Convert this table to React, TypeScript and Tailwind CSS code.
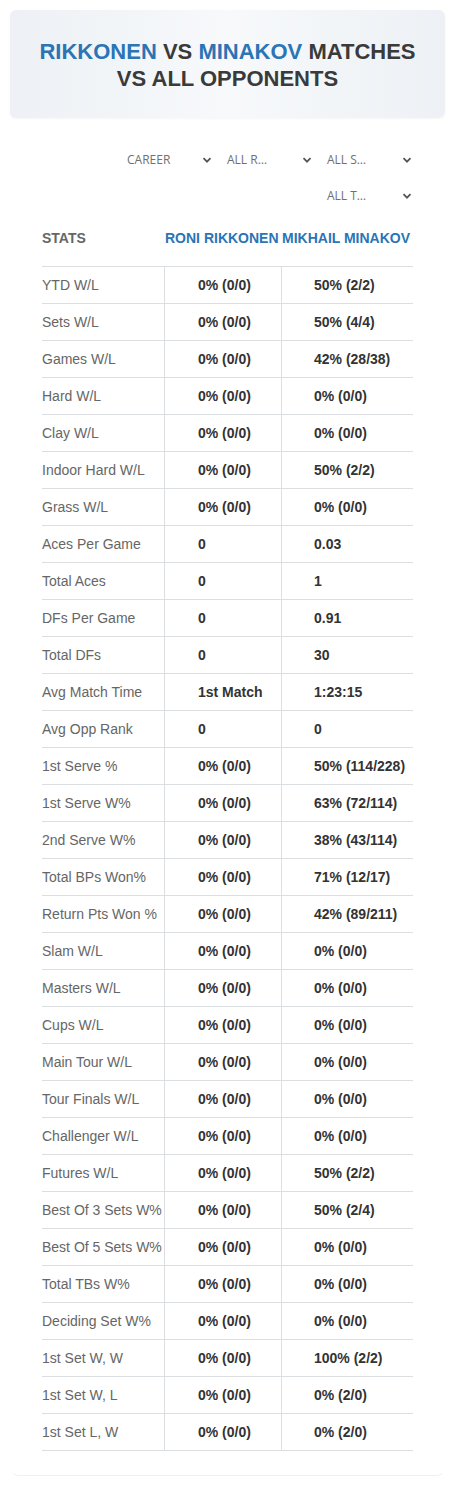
import React from "react";

const rows: [string, string, string][] = [
  ["YTD W/L", "0% (0/0)", "50% (2/2)"],
  ["Sets W/L", "0% (0/0)", "50% (4/4)"],
  ["Games W/L", "0% (0/0)", "42% (28/38)"],
  ["Hard W/L", "0% (0/0)", "0% (0/0)"],
  ["Clay W/L", "0% (0/0)", "0% (0/0)"],
  ["Indoor Hard W/L", "0% (0/0)", "50% (2/2)"],
  ["Grass W/L", "0% (0/0)", "0% (0/0)"],
  ["Aces Per Game", "0", "0.03"],
  ["Total Aces", "0", "1"],
  ["DFs Per Game", "0", "0.91"],
  ["Total DFs", "0", "30"],
  ["Avg Match Time", "1st Match", "1:23:15"],
  ["Avg Opp Rank", "0", "0"],
  ["1st Serve %", "0% (0/0)", "50% (114/228)"],
  ["1st Serve W%", "0% (0/0)", "63% (72/114)"],
  ["2nd Serve W%", "0% (0/0)", "38% (43/114)"],
  ["Total BPs Won%", "0% (0/0)", "71% (12/17)"],
  ["Return Pts Won %", "0% (0/0)", "42% (89/211)"],
  ["Slam W/L", "0% (0/0)", "0% (0/0)"],
  ["Masters W/L", "0% (0/0)", "0% (0/0)"],
  ["Cups W/L", "0% (0/0)", "0% (0/0)"],
  ["Main Tour W/L", "0% (0/0)", "0% (0/0)"],
  ["Tour Finals W/L", "0% (0/0)", "0% (0/0)"],
  ["Challenger W/L", "0% (0/0)", "0% (0/0)"],
  ["Futures W/L", "0% (0/0)", "50% (2/2)"],
  ["Best Of 3 Sets W%", "0% (0/0)", "50% (2/4)"],
  ["Best Of 5 Sets W%", "0% (0/0)", "0% (0/0)"],
  ["Total TBs W%", "0% (0/0)", "0% (0/0)"],
  ["Deciding Set W%", "0% (0/0)", "0% (0/0)"],
  ["1st Set W, W", "0% (0/0)", "100% (2/2)"],
  ["1st Set W, L", "0% (0/0)", "0% (2/0)"],
  ["1st Set L, W", "0% (0/0)", "0% (2/0)"],
];

const Chevron = () => (
  <svg width="10" height="10" viewBox="0 0 10 10" className="text-[#555]">
    <path d="M1.5 3.2 L5 6.7 L8.5 3.2" fill="none" stroke="currentColor" strokeWidth="1.8" />
  </svg>
);

const Select = ({ label }: { label: string }) => (
  <div className="flex items-center justify-between w-[95px] h-[20px] pl-[5px] pr-[5px]">
    <span className="text-[12px] text-[#707070] font-['Open_Sans',sans-serif]">{label}</span>
    <Chevron />
  </div>
);

const App = () => {
  return (
    <div className="w-[455px] bg-white font-['Liberation_Sans',Arial,sans-serif] pt-[10px] pb-[10px]">
      <div className="mx-[10px] h-[108px] rounded-[6px] bg-gradient-to-r from-[#edf1f5] via-[#f7f9fb] to-[#edf1f5] shadow-[0_1px_3px_rgba(0,0,0,0.04)] flex items-center justify-center">
        <h1 className="text-center text-[22px] leading-[27px] font-bold text-[#3a3a3a] pt-[1px]">
          <span className="text-[#2b74b5]">RIKKONEN</span> VS{" "}
          <span className="text-[#2b74b5]">MINAKOV</span> MATCHES
          <br />
          VS ALL OPPONENTS
        </h1>
      </div>

      <div className="mx-[12px] mt-[12px] pt-[20px] pb-[24px] border-b border-[#eef0f2] rounded-b-[6px]">
        <div className="flex flex-wrap justify-end gap-x-[5px] gap-y-[16px] pr-[26px] pl-[100px]">
          <Select label="CAREER" />
          <Select label="ALL R…" />
          <Select label="ALL S…" />
          <Select label="ALL T…" />
        </div>

        <div className="mx-[30px] mt-[9px]">
          <div className="flex items-center h-[52px] text-[14px] font-bold border-b border-[#dcdfe2] pb-[4px]">
            <div className="w-[123px] text-[#666]">STATS</div>
            <div className="w-[117px] text-[#2b74b5] whitespace-nowrap">RONI RIKKONEN</div>
            <div className="flex-1 text-[#2b74b5] whitespace-nowrap">MIKHAIL MINAKOV</div>
          </div>
          {rows.map(([label, a, b]) => (
            <div key={label} className="flex h-[37px] border-b border-[#dcdfe2] text-[14px]">
              <div className="w-[123px] flex items-center text-[#666] border-r border-[#dcdfe2] whitespace-nowrap">{label}</div>
              <div className="w-[117px] flex items-center pl-[33px] font-bold text-[#333] border-r border-[#dcdfe2]">{a}</div>
              <div className="flex-1 flex items-center pl-[32px] font-bold text-[#333]">{b}</div>
            </div>
          ))}
        </div>
      </div>
    </div>
  );
};

export default App;
